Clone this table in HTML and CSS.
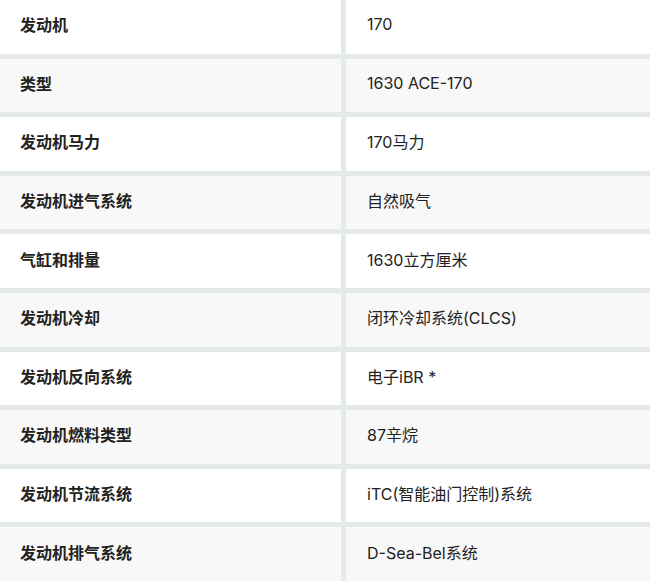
FILE: index.html
```html
<!DOCTYPE html>
<html lang="zh-CN">
<head>
<meta charset="utf-8">
<link rel="stylesheet" href="styles.css">
</head>
<body>
<div class="spec-table">
  <div class="cell label odd">发动机</div><div class="cell value odd">170</div>
  <div class="cell label even">类型</div><div class="cell value even">1630 ACE-170</div>
  <div class="cell label odd">发动机马力</div><div class="cell value odd">170马力</div>
  <div class="cell label even">发动机进气系统</div><div class="cell value even">自然吸气</div>
  <div class="cell label odd">气缸和排量</div><div class="cell value odd">1630立方厘米</div>
  <div class="cell label even">发动机冷却</div><div class="cell value even">闭环冷却系统(CLCS)</div>
  <div class="cell label odd">发动机反向系统</div><div class="cell value odd">电子iBR *</div>
  <div class="cell label even">发动机燃料类型</div><div class="cell value even">87辛烷</div>
  <div class="cell label odd">发动机节流系统</div><div class="cell value odd">iTC(智能油门控制)系统</div>
  <div class="cell label even">发动机排气系统</div><div class="cell value even">D-Sea-Bel系统</div>
</div>
</body>
</html>
```
FILE: styles.css
```css
html, body {
  margin: 0;
  padding: 0;
  background: #ffffff;
}
.spec-table {
  display: grid;
  grid-template-columns: 341px 1fr;
  grid-auto-rows: 53.6px;
  column-gap: 5px;
  row-gap: 5px;
  background: #e4e9e9;
  width: 650px;
  font-family: Inter, "Noto Sans CJK SC", sans-serif;
  font-size: 16px;
  color: #222222;
}
.cell {
  display: flex;
  align-items: center;
  padding: 0 20px 5px;
  white-space: nowrap;
}
.odd { background: #ffffff; }
.even { background: #f8f8f8; }
.label {
  font-weight: 700;
  padding-left: 20px;
}
.value {
  font-weight: 400;
  padding-left: 21px;
}
```
